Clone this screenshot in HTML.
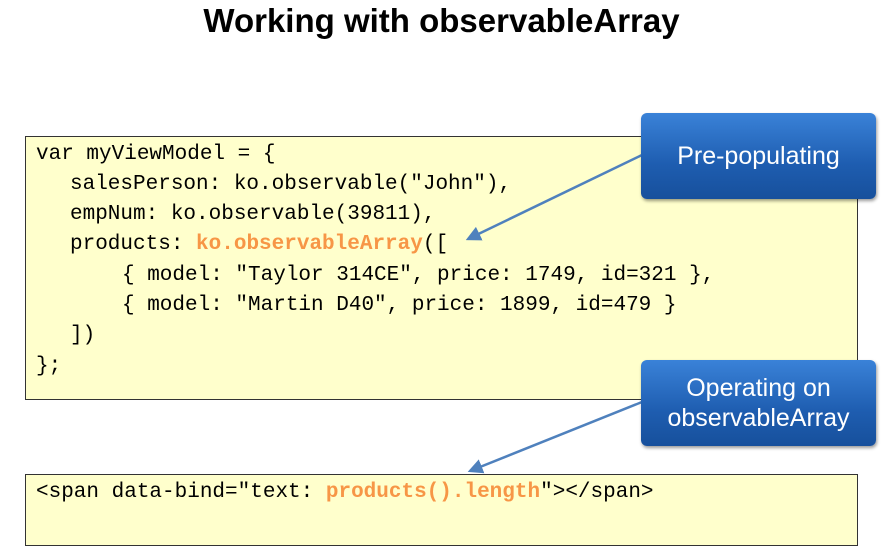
<!DOCTYPE html><html><head><style>
body{margin:0;width:883px;height:553px;background:#fff;position:relative;overflow:hidden;font-family:"Liberation Sans",sans-serif}
.t{position:absolute;top:2px;left:0;width:883px;text-align:center;font-weight:bold;font-size:33px;color:#000}
.box{position:absolute;left:25px;width:831px;background:#ffffcc;border:1px solid #333}
.l{position:absolute;font-family:"Liberation Mono",monospace;font-size:21px;white-space:pre;color:#000}
.o{color:#f79646;font-weight:bold}
.c{position:absolute;left:641px;width:235px;height:86px;border-radius:6px;background:linear-gradient(#3a82d8,#1e5db0 60%,#17509c);color:#fff;font-size:25px;text-align:center;box-shadow:1px 2px 3px rgba(0,0,0,.4);display:flex;align-items:center;justify-content:center;line-height:30px}
</style></head><body>
<div class="t">Working with observableArray</div>
<div class="box" style="top:136px;height:262px"></div>
<div class="box" style="top:474px;height:70px"></div>
<div class="l" style="left:36px;top:143px">var myViewModel = {</div>
<div class="l" style="left:70px;top:173px">salesPerson: ko.observable("John"),</div>
<div class="l" style="left:70px;top:203px">empNum: ko.observable(39811),</div>
<div class="l" style="left:70px;top:233px">products: <span class="o">ko.observableArray</span>([</div>
<div class="l" style="left:122px;top:264px">{ model: "Taylor 314CE", price: 1749, id=321 },</div>
<div class="l" style="left:122px;top:294px">{ model: "Martin D40", price: 1899, id=479 }</div>
<div class="l" style="left:70px;top:324px">])</div>
<div class="l" style="left:36px;top:355px">};</div>
<div class="l" style="left:36px;top:481px">&lt;span data-bind="text: <span class="o">products().length</span>"&gt;&lt;/span&gt;</div>
<svg style="position:absolute;left:0;top:0" width="883" height="553">
<defs><marker id="a" markerWidth="6" markerHeight="6" refX="5" refY="3" orient="auto"><path d="M0,0 L6,3 L0,6 z" fill="#4f81bd"/></marker></defs>
<line x1="642" y1="155" x2="468" y2="239" stroke="#4f81bd" stroke-width="2.5" marker-end="url(#a)"/>
<line x1="642" y1="402" x2="470" y2="471" stroke="#4f81bd" stroke-width="2.5" marker-end="url(#a)"/>
</svg>
<div class="c" style="top:113px">Pre-populating</div>
<div class="c" style="top:360px">Operating on<br>observableArray</div>
</body></html>
